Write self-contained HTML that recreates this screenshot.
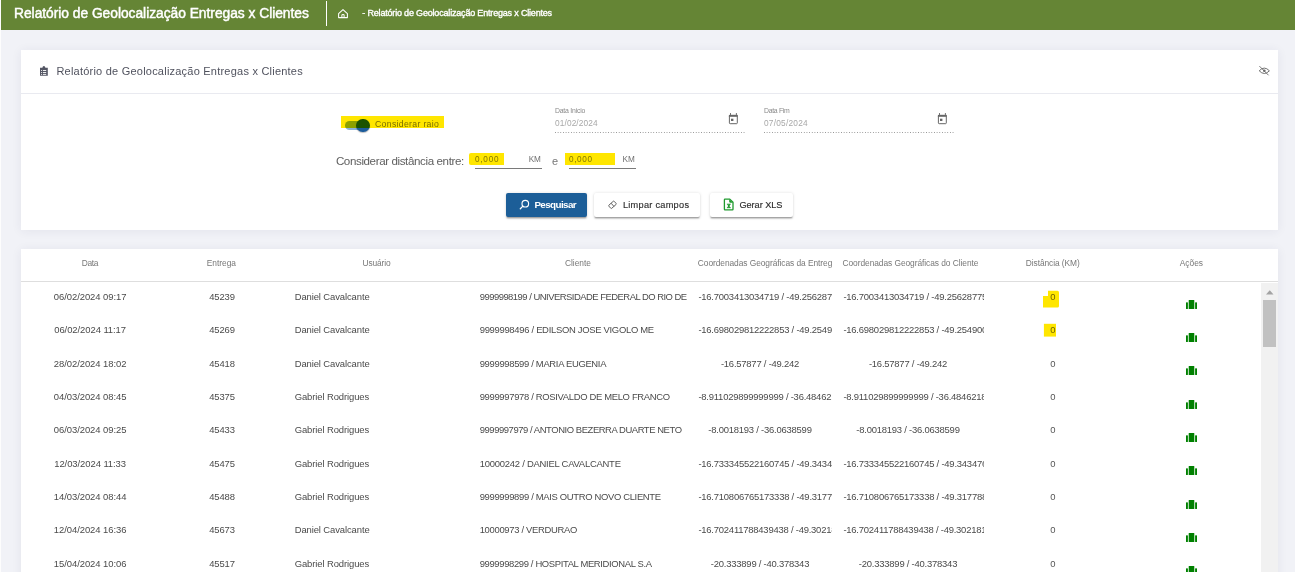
<!DOCTYPE html>
<html><head><meta charset="utf-8">
<style>
html,body{margin:0;padding:0;}
body{width:1295px;height:572px;overflow:hidden;position:relative;background:#f1f2f7;font-family:"Liberation Sans", sans-serif;}
.t{position:absolute;white-space:nowrap;line-height:1;}
.ic{position:absolute;display:block;}
.hl{position:absolute;background:#ffe600;mix-blend-mode:multiply;}
.hl2{position:absolute;mix-blend-mode:multiply;}
#edge{position:absolute;left:0;top:0;width:1px;height:572px;background:#fdfdfd;}
#hdr{position:absolute;left:1px;top:0;width:1294px;height:30px;background:#658535;}
.card{position:absolute;left:21px;width:1257px;background:#fff;box-shadow:0 1px 10px rgba(40,45,80,0.07);}
#c1{top:50px;height:180px;}
#c2{top:249px;height:340px;}
.hline{position:absolute;height:1px;}
.btn{position:absolute;top:193px;height:24px;border-radius:2px;box-sizing:border-box;}
</style></head><body>
<div id="edge"></div>
<div id="hdr"></div>
<div style="position:absolute;left:326px;top:1px;width:1px;height:25px;background:#fff"></div>
<svg class="ic" style="left:333px;top:5px" width="20" height="17" viewBox="0 0 20 17"><path d="M5.6 8.7 L10 4.6 L14.4 8.7 V12.6 H5.6 Z" fill="none" stroke="#fff" stroke-width="1.05" stroke-linejoin="round"/><path d="M8.9 12.6 V9.6 H11.1 V12.6" fill="none" stroke="#fff" stroke-width="1"/></svg>

<div class="card" id="c1"></div>
<div class="hline" style="left:21px;top:93px;width:1257px;background:#e9eaf0"></div>
<svg class="ic" style="left:34px;top:62px" width="20" height="18" viewBox="0 0 20 18"><path d="M6 5.7 H8.4 Q8.6 4 9.9 4 Q11.2 4 11.4 5.7 H13.8 V13.8 H6 Z" fill="#545664"/><rect x="7" y="8.1" width="0.9" height="0.9" fill="#fff"/><rect x="8.9" y="8.1" width="3.3" height="0.9" fill="#fff"/><rect x="7" y="10" width="0.9" height="0.9" fill="#fff"/><rect x="8.9" y="10" width="3.3" height="0.9" fill="#fff"/><rect x="7" y="11.9" width="0.9" height="0.9" fill="#fff"/><rect x="8.9" y="11.9" width="3.3" height="0.9" fill="#fff"/></svg>
<svg class="ic" style="left:1252px;top:60px" width="24" height="22" viewBox="0 0 24 22"><path d="M7.2 10.8 Q12.3 5.4 17.4 10.8 Q12.3 16.2 7.2 10.8 Z" fill="none" stroke="#6a6a6a" stroke-width="0.95"/><circle cx="12.3" cy="10.8" r="1.3" fill="#6a6a6a"/><path d="M7.4 6.1 L16.6 15.3" stroke="#6a6a6a" stroke-width="0.9"/></svg>

<!-- toggle -->
<div style="position:absolute;left:345px;top:121px;width:24px;height:9px;border-radius:4.5px;background:#8db3dc"></div>
<div style="position:absolute;left:356px;top:118.8px;width:13.6px;height:13.6px;border-radius:50%;background:#1b5c9c;box-shadow:0 1px 1px rgba(0,0,0,.25)"></div>

<!-- date fields -->
<div style="position:absolute;left:555px;top:132px;width:190px;height:1px;background-image:linear-gradient(to right,rgba(0,0,0,.42) 0,rgba(0,0,0,.42) 33%,transparent 0);background-size:2.67px 1px;"></div>
<div style="position:absolute;left:764px;top:132px;width:190px;height:1px;background-image:linear-gradient(to right,rgba(0,0,0,.42) 0,rgba(0,0,0,.42) 33%,transparent 0);background-size:2.67px 1px;"></div>
<svg class="ic" style="left:722px;top:108px" width="22" height="22" viewBox="0 0 22 22"><rect x="7.4" y="7.4" width="7.9" height="8.3" rx="0.8" fill="none" stroke="#666" stroke-width="1"/><rect x="6.9" y="6.9" width="8.9" height="1.9" fill="#666"/><rect x="8" y="5" width="0.9" height="2" fill="#666"/><rect x="13.9" y="5" width="0.9" height="2" fill="#666"/><rect x="9" y="10.7" width="2.4" height="2.3" fill="#666"/></svg>
<svg class="ic" style="left:931px;top:108px" width="22" height="22" viewBox="0 0 22 22"><rect x="7.4" y="7.4" width="7.9" height="8.3" rx="0.8" fill="none" stroke="#666" stroke-width="1"/><rect x="6.9" y="6.9" width="8.9" height="1.9" fill="#666"/><rect x="8" y="5" width="0.9" height="2" fill="#666"/><rect x="13.9" y="5" width="0.9" height="2" fill="#666"/><rect x="9" y="10.7" width="2.4" height="2.3" fill="#666"/></svg>

<!-- km inputs underline -->
<div style="position:absolute;left:475px;top:168px;width:67px;height:1px;background:#7a7a7a"></div>
<div style="position:absolute;left:569px;top:168px;width:67px;height:1px;background:#7a7a7a"></div>

<!-- buttons -->
<div class="btn" style="left:506px;width:81px;background:#1c5e98;box-shadow:0 2px 1px -1.3px rgba(0,0,0,.2),0 1.3px 1.3px 0 rgba(0,0,0,.14),0 0.7px 3.3px 0 rgba(0,0,0,.12)"></div>
<svg class="ic" style="left:514px;top:195px" width="20" height="19" viewBox="0 0 20 19"><circle cx="11.3" cy="8.7" r="3.3" fill="none" stroke="#fff" stroke-width="1.15"/><path d="M8.9 11.1 L6.3 13.7" stroke="#fff" stroke-width="1.3" stroke-linecap="round"/></svg>
<div class="btn" style="left:594px;width:106px;background:#fff;box-shadow:0 2px 1px -1.3px rgba(0,0,0,.2),0 1.3px 1.3px 0 rgba(0,0,0,.14),0 0.7px 3.3px 0 rgba(0,0,0,.12)"></div>
<svg class="ic" style="left:603px;top:196px" width="20" height="18" viewBox="0 0 20 18"><g transform="rotate(-41.6 9.5 8.8)"><rect x="5.9" y="6.7" width="7.2" height="4.2" rx="0.7" fill="none" stroke="#5c5c5c" stroke-width="0.9"/><path d="M9.5 6.7 V10.9" stroke="#5c5c5c" stroke-width="0.9"/></g></svg>
<div class="btn" style="left:710px;width:83px;background:#fff;box-shadow:0 2px 1px -1.3px rgba(0,0,0,.2),0 1.3px 1.3px 0 rgba(0,0,0,.14),0 0.7px 3.3px 0 rgba(0,0,0,.12)"></div>
<svg class="ic" style="left:719px;top:195px" width="20" height="19" viewBox="0 0 20 19"><path d="M6 4.1 H10.8 L14 7.3 V14.3 Q14 14.9 13.4 14.9 H6 Q5.4 14.9 5.4 14.3 V4.7 Q5.4 4.1 6 4.1 Z" fill="none" stroke="#1f9a2e" stroke-width="1.3" stroke-linejoin="round"/><path d="M10.2 4.2 V6.6 Q10.2 7.8 11.4 7.8 H14 Z" fill="#1f9a2e"/><path d="M7.9 9.2 H11.7 M7.9 12.7 H11.7" stroke="#1f9a2e" stroke-width="0.9"/><path d="M8.7 9.2 L10.9 12.7 M10.9 9.2 L8.7 12.7" stroke="#1f9a2e" stroke-width="1.2"/></svg>

<!-- card 2 -->
<div class="card" id="c2"></div>
<div class="hline" style="left:21px;top:281px;width:1257px;background:#dedede"></div>
<div style="position:absolute;left:1261px;top:283px;width:17px;height:300px;background:#f1f1f1"></div>
<div style="position:absolute;left:1263px;top:300px;width:13px;height:47px;background:#c1c1c1"></div>
<svg class="ic" style="left:1266px;top:289.5px" width="8" height="5" viewBox="0 0 8 5"><path d="M0 4.5 L3.75 0.3 L7.5 4.5 Z" fill="#a3a3a3"/></svg>

<div class="t" style="left:14.00px;top:6.72px;font-size:13.8px;color:#fff;letter-spacing:-0.025px;-webkit-text-stroke:0.45px #fff;">Relatório de Geolocalização Entregas x Clientes</div>
<div class="t" style="left:362.30px;top:9.18px;font-size:9px;color:#fff;letter-spacing:-0.183px;-webkit-text-stroke:0.35px #fff;">- Relatório de Geolocalização Entregas x Clientes</div>
<div class="t" style="left:56.40px;top:65.99px;font-size:11px;color:#50525e;letter-spacing:0.224px;">Relatório de Geolocalização Entregas x Clientes</div>
<div class="t" style="left:375.00px;top:120.14px;font-size:8.7px;color:#7a7a7a;letter-spacing:0.317px;">Considerar raio</div>
<div class="t" style="left:555.00px;top:107.56px;font-size:6.9px;color:#8a8a8a;letter-spacing:-0.222px;">Data Inicio</div>
<div class="t" style="left:555.00px;top:119.07px;font-size:8.3px;color:#a8a8a8;letter-spacing:0.121px;">01/02/2024</div>
<div class="t" style="left:764.00px;top:107.56px;font-size:6.9px;color:#8a8a8a;letter-spacing:-0.316px;">Data Fim</div>
<div class="t" style="left:764.00px;top:119.07px;font-size:8.3px;color:#a8a8a8;letter-spacing:0.232px;">07/05/2024</div>
<div class="t" style="left:335.90px;top:155.28px;font-size:11.6px;color:#606060;letter-spacing:-0.394px;">Considerar distância entre:</div>
<div class="t" style="left:475.00px;top:156.36px;font-size:8.2px;color:#858585;letter-spacing:0.766px;">0,000</div>
<div class="t" style="left:528.70px;top:155.56px;font-size:8.2px;color:#707070;letter-spacing:-0.161px;">KM</div>
<div class="t" style="left:552.00px;top:155.69px;font-size:11px;color:#777;letter-spacing:0.000px;">e</div>
<div class="t" style="left:569.00px;top:156.36px;font-size:8.2px;color:#858585;letter-spacing:0.641px;">0,000</div>
<div class="t" style="left:622.60px;top:155.56px;font-size:8.2px;color:#707070;letter-spacing:-0.061px;">KM</div>
<div class="t" style="left:534.40px;top:199.70px;font-size:9.8px;color:#fff;letter-spacing:-0.577px;font-weight:bold;">Pesquisar</div>
<div class="t" style="left:622.90px;top:200.51px;font-size:9.2px;color:#2e2e2e;letter-spacing:0.274px;-webkit-text-stroke:0.15px #2e2e2e;">Limpar campos</div>
<div class="t" style="left:739.40px;top:200.51px;font-size:9.2px;color:#2e2e2e;letter-spacing:-0.047px;-webkit-text-stroke:0.15px #2e2e2e;">Gerar XLS</div>
<div class="t" style="left:81.80px;top:258.79px;font-size:8.4px;color:#787878;letter-spacing:-0.378px;">Data</div>
<div class="t" style="left:206.66px;top:258.79px;font-size:8.4px;color:#787878;letter-spacing:0.000px;">Entrega</div>
<div class="t" style="left:362.60px;top:258.79px;font-size:8.4px;color:#787878;letter-spacing:-0.150px;">Usuário</div>
<div class="t" style="left:565.00px;top:258.79px;font-size:8.4px;color:#787878;letter-spacing:-0.019px;">Cliente</div>
<div style="position:absolute;left:693px;top:0;width:139.20px;height:572px;overflow:hidden"><div class="t" style="left:4.80px;top:258.79px;font-size:8.4px;color:#787878;letter-spacing:-0.060px;">Coordenadas Geográficas da Entregas</div></div>
<div style="position:absolute;left:838px;top:0;width:146.00px;height:572px;overflow:hidden"><div class="t" style="left:4.50px;top:258.79px;font-size:8.4px;color:#787878;letter-spacing:-0.056px;">Coordenadas Geográficas do Cliente</div></div>
<div class="t" style="left:1025.80px;top:258.79px;font-size:8.4px;color:#787878;letter-spacing:-0.071px;">Distância (KM)</div>
<div class="t" style="left:1179.70px;top:258.79px;font-size:8.4px;color:#787878;letter-spacing:0.003px;">Ações</div>
<div class="t" style="left:53.84px;top:292.00px;font-size:9.45px;color:#4a4a4a;letter-spacing:-0.060px;">06/02/2024 09:17</div>
<div class="t" style="left:209.14px;top:292.00px;font-size:9.45px;color:#4a4a4a;letter-spacing:-0.120px;">45239</div>
<div class="t" style="left:294.70px;top:292.00px;font-size:9.45px;color:#4a4a4a;letter-spacing:-0.100px;">Daniel Cavalcante</div>
<div style="position:absolute;left:474px;top:0;width:214.00px;height:572px;overflow:hidden"><div class="t" style="left:5.70px;top:292.00px;font-size:9.45px;color:#4a4a4a;letter-spacing:-0.510px;">9999998199 / UNIVERSIDADE FEDERAL DO RIO DE</div></div>
<div style="position:absolute;left:693px;top:0;width:139.20px;height:572px;overflow:hidden"><div class="t" style="left:5.40px;top:292.00px;font-size:9.45px;color:#4a4a4a;letter-spacing:-0.220px;">-16.7003413034719 / -49.25628775</div></div>
<div style="position:absolute;left:838px;top:0;width:146.00px;height:572px;overflow:hidden"><div class="t" style="left:5.40px;top:292.00px;font-size:9.45px;color:#4a4a4a;letter-spacing:-0.220px;">-16.7003413034719 / -49.25628775</div></div>
<div class="t" style="left:1050.30px;top:292.00px;font-size:9.45px;color:#6e6e6e;letter-spacing:0.000px;">0</div>
<div class="t" style="left:54.19px;top:325.33px;font-size:9.45px;color:#4a4a4a;letter-spacing:-0.060px;">06/02/2024 11:17</div>
<div class="t" style="left:209.14px;top:325.33px;font-size:9.45px;color:#4a4a4a;letter-spacing:-0.120px;">45269</div>
<div class="t" style="left:294.70px;top:325.33px;font-size:9.45px;color:#4a4a4a;letter-spacing:-0.100px;">Daniel Cavalcante</div>
<div style="position:absolute;left:474px;top:0;width:214.00px;height:572px;overflow:hidden"><div class="t" style="left:5.70px;top:325.33px;font-size:9.45px;color:#4a4a4a;letter-spacing:-0.301px;">9999998496 / EDILSON JOSE VIGOLO ME</div></div>
<div style="position:absolute;left:693px;top:0;width:139.20px;height:572px;overflow:hidden"><div class="t" style="left:5.40px;top:325.33px;font-size:9.45px;color:#4a4a4a;letter-spacing:-0.220px;">-16.698029812222853 / -49.2549000</div></div>
<div style="position:absolute;left:838px;top:0;width:146.00px;height:572px;overflow:hidden"><div class="t" style="left:5.40px;top:325.33px;font-size:9.45px;color:#4a4a4a;letter-spacing:-0.220px;">-16.698029812222853 / -49.2549000</div></div>
<div class="t" style="left:1050.30px;top:325.33px;font-size:9.45px;color:#6e6e6e;letter-spacing:0.000px;">0</div>
<div class="t" style="left:53.84px;top:358.67px;font-size:9.45px;color:#4a4a4a;letter-spacing:-0.060px;">28/02/2024 18:02</div>
<div class="t" style="left:209.14px;top:358.67px;font-size:9.45px;color:#4a4a4a;letter-spacing:-0.120px;">45418</div>
<div class="t" style="left:294.70px;top:358.67px;font-size:9.45px;color:#4a4a4a;letter-spacing:-0.100px;">Daniel Cavalcante</div>
<div style="position:absolute;left:474px;top:0;width:214.00px;height:572px;overflow:hidden"><div class="t" style="left:5.70px;top:358.67px;font-size:9.45px;color:#4a4a4a;letter-spacing:-0.322px;">9999998599 / MARIA EUGENIA</div></div>
<div style="position:absolute;left:693px;top:0;width:139.20px;height:572px;overflow:hidden"><div class="t" style="left:27.91px;top:358.67px;font-size:9.45px;color:#4a4a4a;letter-spacing:-0.220px;">-16.57877 / -49.242</div></div>
<div style="position:absolute;left:838px;top:0;width:146.00px;height:572px;overflow:hidden"><div class="t" style="left:30.91px;top:358.67px;font-size:9.45px;color:#4a4a4a;letter-spacing:-0.220px;">-16.57877 / -49.242</div></div>
<div class="t" style="left:1050.30px;top:358.67px;font-size:9.45px;color:#555;letter-spacing:0.000px;">0</div>
<div class="t" style="left:53.84px;top:392.00px;font-size:9.45px;color:#4a4a4a;letter-spacing:-0.060px;">04/03/2024 08:45</div>
<div class="t" style="left:209.14px;top:392.00px;font-size:9.45px;color:#4a4a4a;letter-spacing:-0.120px;">45375</div>
<div class="t" style="left:294.70px;top:392.00px;font-size:9.45px;color:#4a4a4a;letter-spacing:-0.100px;">Gabriel Rodrigues</div>
<div style="position:absolute;left:474px;top:0;width:214.00px;height:572px;overflow:hidden"><div class="t" style="left:5.70px;top:392.00px;font-size:9.45px;color:#4a4a4a;letter-spacing:-0.329px;">9999997978 / ROSIVALDO DE MELO FRANCO</div></div>
<div style="position:absolute;left:693px;top:0;width:139.20px;height:572px;overflow:hidden"><div class="t" style="left:5.40px;top:392.00px;font-size:9.45px;color:#4a4a4a;letter-spacing:-0.220px;">-8.911029899999999 / -36.4846218</div></div>
<div style="position:absolute;left:838px;top:0;width:146.00px;height:572px;overflow:hidden"><div class="t" style="left:5.40px;top:392.00px;font-size:9.45px;color:#4a4a4a;letter-spacing:-0.220px;">-8.911029899999999 / -36.4846218</div></div>
<div class="t" style="left:1050.30px;top:392.00px;font-size:9.45px;color:#555;letter-spacing:0.000px;">0</div>
<div class="t" style="left:53.84px;top:425.33px;font-size:9.45px;color:#4a4a4a;letter-spacing:-0.060px;">06/03/2024 09:25</div>
<div class="t" style="left:209.14px;top:425.33px;font-size:9.45px;color:#4a4a4a;letter-spacing:-0.120px;">45433</div>
<div class="t" style="left:294.70px;top:425.33px;font-size:9.45px;color:#4a4a4a;letter-spacing:-0.100px;">Gabriel Rodrigues</div>
<div style="position:absolute;left:474px;top:0;width:214.00px;height:572px;overflow:hidden"><div class="t" style="left:5.70px;top:425.33px;font-size:9.45px;color:#4a4a4a;letter-spacing:-0.435px;">9999997979 / ANTONIO BEZERRA DUARTE NETO</div></div>
<div style="position:absolute;left:693px;top:0;width:139.20px;height:572px;overflow:hidden"><div class="t" style="left:15.34px;top:425.33px;font-size:9.45px;color:#4a4a4a;letter-spacing:-0.220px;">-8.0018193 / -36.0638599</div></div>
<div style="position:absolute;left:838px;top:0;width:146.00px;height:572px;overflow:hidden"><div class="t" style="left:18.34px;top:425.33px;font-size:9.45px;color:#4a4a4a;letter-spacing:-0.220px;">-8.0018193 / -36.0638599</div></div>
<div class="t" style="left:1050.30px;top:425.33px;font-size:9.45px;color:#555;letter-spacing:0.000px;">0</div>
<div class="t" style="left:54.19px;top:458.67px;font-size:9.45px;color:#4a4a4a;letter-spacing:-0.060px;">12/03/2024 11:33</div>
<div class="t" style="left:209.14px;top:458.67px;font-size:9.45px;color:#4a4a4a;letter-spacing:-0.120px;">45475</div>
<div class="t" style="left:294.70px;top:458.67px;font-size:9.45px;color:#4a4a4a;letter-spacing:-0.100px;">Gabriel Rodrigues</div>
<div style="position:absolute;left:474px;top:0;width:214.00px;height:572px;overflow:hidden"><div class="t" style="left:5.70px;top:458.67px;font-size:9.45px;color:#4a4a4a;letter-spacing:-0.241px;">10000242 / DANIEL CAVALCANTE</div></div>
<div style="position:absolute;left:693px;top:0;width:139.20px;height:572px;overflow:hidden"><div class="t" style="left:5.40px;top:458.67px;font-size:9.45px;color:#4a4a4a;letter-spacing:-0.220px;">-16.733345522160745 / -49.3434766</div></div>
<div style="position:absolute;left:838px;top:0;width:146.00px;height:572px;overflow:hidden"><div class="t" style="left:5.40px;top:458.67px;font-size:9.45px;color:#4a4a4a;letter-spacing:-0.220px;">-16.733345522160745 / -49.3434766</div></div>
<div class="t" style="left:1050.30px;top:458.67px;font-size:9.45px;color:#555;letter-spacing:0.000px;">0</div>
<div class="t" style="left:53.84px;top:492.00px;font-size:9.45px;color:#4a4a4a;letter-spacing:-0.060px;">14/03/2024 08:44</div>
<div class="t" style="left:209.14px;top:492.00px;font-size:9.45px;color:#4a4a4a;letter-spacing:-0.120px;">45488</div>
<div class="t" style="left:294.70px;top:492.00px;font-size:9.45px;color:#4a4a4a;letter-spacing:-0.100px;">Gabriel Rodrigues</div>
<div style="position:absolute;left:474px;top:0;width:214.00px;height:572px;overflow:hidden"><div class="t" style="left:5.70px;top:492.00px;font-size:9.45px;color:#4a4a4a;letter-spacing:-0.332px;">9999999899 / MAIS OUTRO NOVO CLIENTE</div></div>
<div style="position:absolute;left:693px;top:0;width:139.20px;height:572px;overflow:hidden"><div class="t" style="left:5.40px;top:492.00px;font-size:9.45px;color:#4a4a4a;letter-spacing:-0.220px;">-16.710806765173338 / -49.3177888</div></div>
<div style="position:absolute;left:838px;top:0;width:146.00px;height:572px;overflow:hidden"><div class="t" style="left:5.40px;top:492.00px;font-size:9.45px;color:#4a4a4a;letter-spacing:-0.220px;">-16.710806765173338 / -49.3177888</div></div>
<div class="t" style="left:1050.30px;top:492.00px;font-size:9.45px;color:#555;letter-spacing:0.000px;">0</div>
<div class="t" style="left:53.84px;top:525.33px;font-size:9.45px;color:#4a4a4a;letter-spacing:-0.060px;">12/04/2024 16:36</div>
<div class="t" style="left:209.14px;top:525.33px;font-size:9.45px;color:#4a4a4a;letter-spacing:-0.120px;">45673</div>
<div class="t" style="left:294.70px;top:525.33px;font-size:9.45px;color:#4a4a4a;letter-spacing:-0.100px;">Daniel Cavalcante</div>
<div style="position:absolute;left:474px;top:0;width:214.00px;height:572px;overflow:hidden"><div class="t" style="left:5.70px;top:525.33px;font-size:9.45px;color:#4a4a4a;letter-spacing:-0.317px;">10000973 / VERDURAO</div></div>
<div style="position:absolute;left:693px;top:0;width:139.20px;height:572px;overflow:hidden"><div class="t" style="left:5.40px;top:525.33px;font-size:9.45px;color:#4a4a4a;letter-spacing:-0.220px;">-16.702411788439438 / -49.3021818</div></div>
<div style="position:absolute;left:838px;top:0;width:146.00px;height:572px;overflow:hidden"><div class="t" style="left:5.40px;top:525.33px;font-size:9.45px;color:#4a4a4a;letter-spacing:-0.220px;">-16.702411788439438 / -49.3021818</div></div>
<div class="t" style="left:1050.30px;top:525.33px;font-size:9.45px;color:#555;letter-spacing:0.000px;">0</div>
<div class="t" style="left:53.84px;top:558.66px;font-size:9.45px;color:#4a4a4a;letter-spacing:-0.060px;">15/04/2024 10:06</div>
<div class="t" style="left:209.14px;top:558.66px;font-size:9.45px;color:#4a4a4a;letter-spacing:-0.120px;">45517</div>
<div class="t" style="left:294.70px;top:558.66px;font-size:9.45px;color:#4a4a4a;letter-spacing:-0.100px;">Gabriel Rodrigues</div>
<div style="position:absolute;left:474px;top:0;width:214.00px;height:572px;overflow:hidden"><div class="t" style="left:5.70px;top:558.66px;font-size:9.45px;color:#4a4a4a;letter-spacing:-0.358px;">9999998299 / HOSPITAL MERIDIONAL S.A</div></div>
<div style="position:absolute;left:693px;top:0;width:139.20px;height:572px;overflow:hidden"><div class="t" style="left:17.86px;top:558.66px;font-size:9.45px;color:#4a4a4a;letter-spacing:-0.220px;">-20.333899 / -40.378343</div></div>
<div style="position:absolute;left:838px;top:0;width:146.00px;height:572px;overflow:hidden"><div class="t" style="left:20.86px;top:558.66px;font-size:9.45px;color:#4a4a4a;letter-spacing:-0.220px;">-20.333899 / -40.378343</div></div>
<div class="t" style="left:1050.30px;top:558.66px;font-size:9.45px;color:#555;letter-spacing:0.000px;">0</div>
<svg class="ic" style="left:1186.25px;top:299.80px" width="11" height="9" viewBox="0 0 11 9"><path fill="#008000" d="M2.7 0.3 Q2.7 0 3 0 H8 Q8.3 0 8.3 0.3 V9 H2.7 Z M4 1.1 Q4 0.9 4.3 0.9 H6.7 Q7 0.9 7 1.1 V1.9 H4 Z"/><rect x="0" y="2.3" width="1.9" height="6.7" rx="0.6" fill="#008000"/><rect x="9.1" y="2.3" width="1.9" height="6.7" rx="0.6" fill="#008000"/></svg>
<svg class="ic" style="left:1186.25px;top:333.13px" width="11" height="9" viewBox="0 0 11 9"><path fill="#008000" d="M2.7 0.3 Q2.7 0 3 0 H8 Q8.3 0 8.3 0.3 V9 H2.7 Z M4 1.1 Q4 0.9 4.3 0.9 H6.7 Q7 0.9 7 1.1 V1.9 H4 Z"/><rect x="0" y="2.3" width="1.9" height="6.7" rx="0.6" fill="#008000"/><rect x="9.1" y="2.3" width="1.9" height="6.7" rx="0.6" fill="#008000"/></svg>
<svg class="ic" style="left:1186.25px;top:366.47px" width="11" height="9" viewBox="0 0 11 9"><path fill="#008000" d="M2.7 0.3 Q2.7 0 3 0 H8 Q8.3 0 8.3 0.3 V9 H2.7 Z M4 1.1 Q4 0.9 4.3 0.9 H6.7 Q7 0.9 7 1.1 V1.9 H4 Z"/><rect x="0" y="2.3" width="1.9" height="6.7" rx="0.6" fill="#008000"/><rect x="9.1" y="2.3" width="1.9" height="6.7" rx="0.6" fill="#008000"/></svg>
<svg class="ic" style="left:1186.25px;top:399.80px" width="11" height="9" viewBox="0 0 11 9"><path fill="#008000" d="M2.7 0.3 Q2.7 0 3 0 H8 Q8.3 0 8.3 0.3 V9 H2.7 Z M4 1.1 Q4 0.9 4.3 0.9 H6.7 Q7 0.9 7 1.1 V1.9 H4 Z"/><rect x="0" y="2.3" width="1.9" height="6.7" rx="0.6" fill="#008000"/><rect x="9.1" y="2.3" width="1.9" height="6.7" rx="0.6" fill="#008000"/></svg>
<svg class="ic" style="left:1186.25px;top:433.13px" width="11" height="9" viewBox="0 0 11 9"><path fill="#008000" d="M2.7 0.3 Q2.7 0 3 0 H8 Q8.3 0 8.3 0.3 V9 H2.7 Z M4 1.1 Q4 0.9 4.3 0.9 H6.7 Q7 0.9 7 1.1 V1.9 H4 Z"/><rect x="0" y="2.3" width="1.9" height="6.7" rx="0.6" fill="#008000"/><rect x="9.1" y="2.3" width="1.9" height="6.7" rx="0.6" fill="#008000"/></svg>
<svg class="ic" style="left:1186.25px;top:466.47px" width="11" height="9" viewBox="0 0 11 9"><path fill="#008000" d="M2.7 0.3 Q2.7 0 3 0 H8 Q8.3 0 8.3 0.3 V9 H2.7 Z M4 1.1 Q4 0.9 4.3 0.9 H6.7 Q7 0.9 7 1.1 V1.9 H4 Z"/><rect x="0" y="2.3" width="1.9" height="6.7" rx="0.6" fill="#008000"/><rect x="9.1" y="2.3" width="1.9" height="6.7" rx="0.6" fill="#008000"/></svg>
<svg class="ic" style="left:1186.25px;top:499.80px" width="11" height="9" viewBox="0 0 11 9"><path fill="#008000" d="M2.7 0.3 Q2.7 0 3 0 H8 Q8.3 0 8.3 0.3 V9 H2.7 Z M4 1.1 Q4 0.9 4.3 0.9 H6.7 Q7 0.9 7 1.1 V1.9 H4 Z"/><rect x="0" y="2.3" width="1.9" height="6.7" rx="0.6" fill="#008000"/><rect x="9.1" y="2.3" width="1.9" height="6.7" rx="0.6" fill="#008000"/></svg>
<svg class="ic" style="left:1186.25px;top:533.13px" width="11" height="9" viewBox="0 0 11 9"><path fill="#008000" d="M2.7 0.3 Q2.7 0 3 0 H8 Q8.3 0 8.3 0.3 V9 H2.7 Z M4 1.1 Q4 0.9 4.3 0.9 H6.7 Q7 0.9 7 1.1 V1.9 H4 Z"/><rect x="0" y="2.3" width="1.9" height="6.7" rx="0.6" fill="#008000"/><rect x="9.1" y="2.3" width="1.9" height="6.7" rx="0.6" fill="#008000"/></svg>
<svg class="ic" style="left:1186.25px;top:566.46px" width="11" height="9" viewBox="0 0 11 9"><path fill="#008000" d="M2.7 0.3 Q2.7 0 3 0 H8 Q8.3 0 8.3 0.3 V9 H2.7 Z M4 1.1 Q4 0.9 4.3 0.9 H6.7 Q7 0.9 7 1.1 V1.9 H4 Z"/><rect x="0" y="2.3" width="1.9" height="6.7" rx="0.6" fill="#008000"/><rect x="9.1" y="2.3" width="1.9" height="6.7" rx="0.6" fill="#008000"/></svg>

<!-- highlighter overlays -->
<div class="hl" style="left:341px;top:116px;width:103px;height:12px"></div>
<div class="hl" style="left:469px;top:153px;width:35px;height:12px;border-radius:2px 0 0 2px"></div>
<div class="hl" style="left:565px;top:153px;width:50px;height:12px"></div>
<svg class="hl2" style="left:1040px;top:288px" width="24" height="52" viewBox="0 0 24 52"><path d="M8 2.8 H17.5 Q19 2.8 19 4.5 V18 Q19 19.6 17.5 19.6 H3 V8 H8 Z" fill="#ffe600"/><path d="M3.9 35.8 H16 V48.6 H3.9 Z" fill="#ffe600"/></svg>
</body></html>
